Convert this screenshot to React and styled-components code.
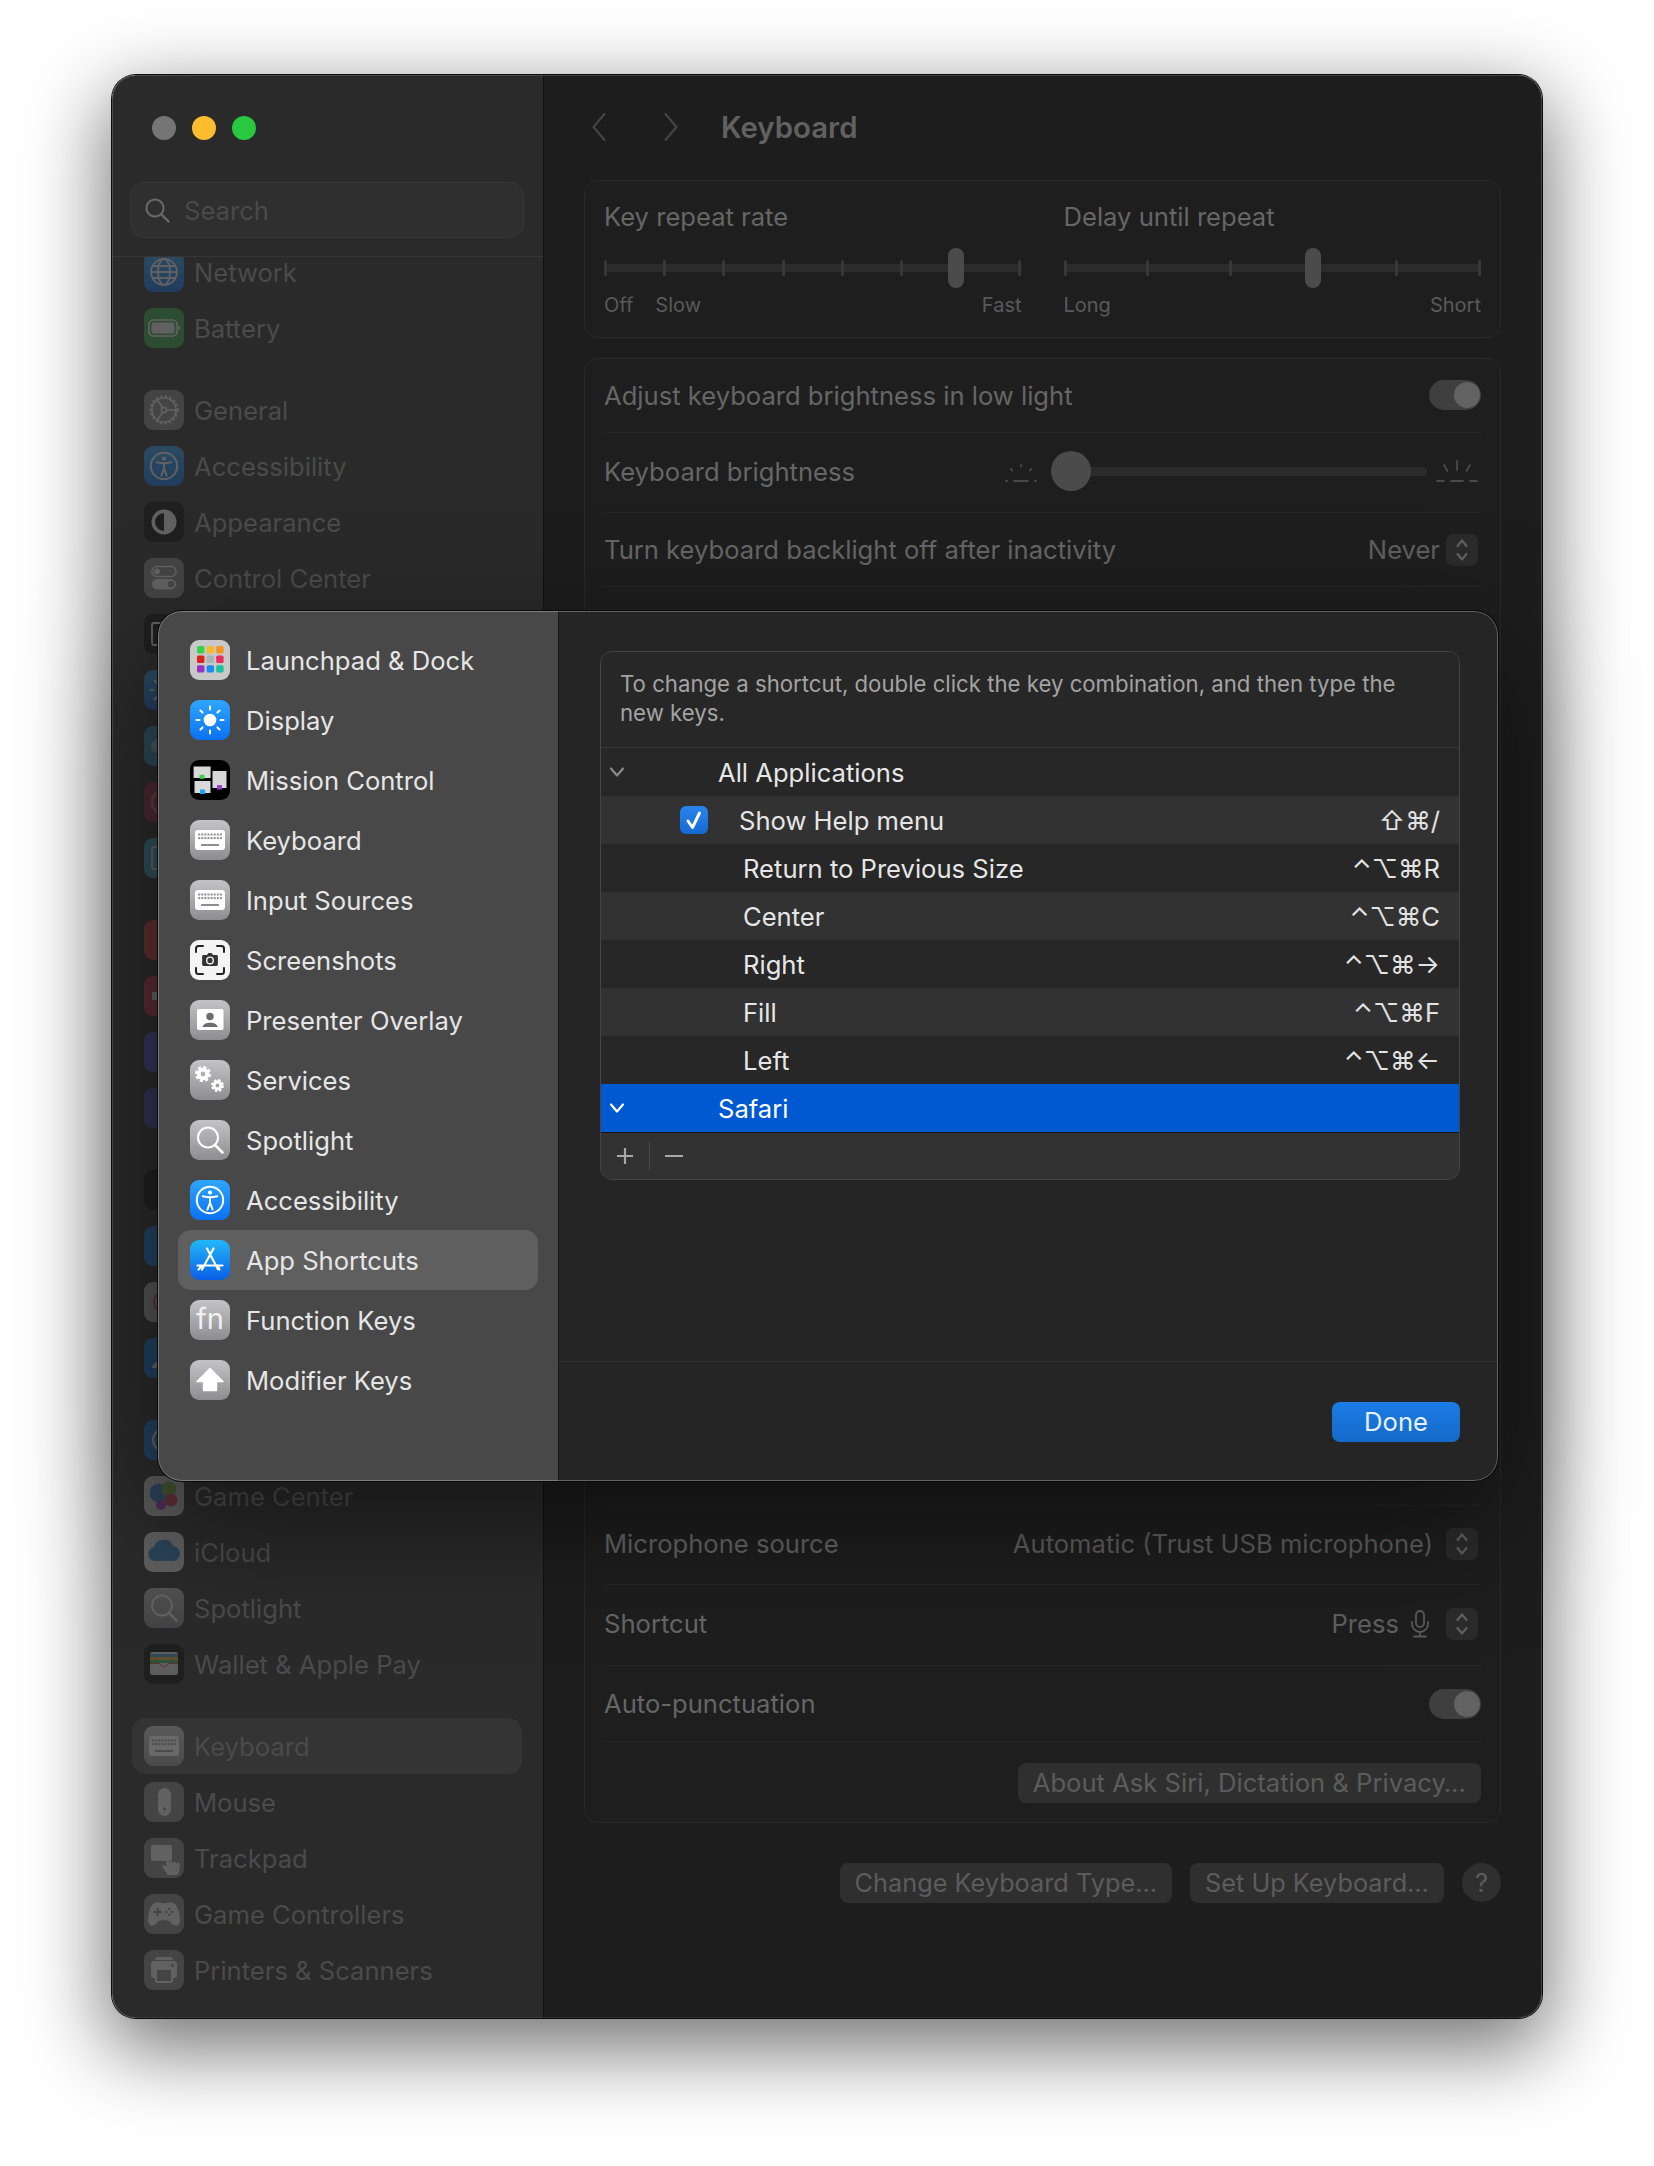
import React from 'react';
import styled, { createGlobalStyle } from 'styled-components';
import { IoGameController, IoPrint } from 'react-icons/io5';
import { FaHandPointer } from 'react-icons/fa';

const FONT = 'Inter, "Noto Sans", "DejaVu Sans", sans-serif';
const grayBg = 'linear-gradient(#c4c4c8, #8c8c91)';
const blueBg = 'linear-gradient(#2ea6ff, #0a72f2)';

const GlobalStyle = createGlobalStyle`
  html, body {
    margin: 0;
    background: #fff;
    font-family: ${FONT};
  }
  body {
    width: 1654px;
    height: 2166px;
    overflow: hidden;
  }
`;

const HandSlot = styled.span`
  position: absolute;
  right: 3px;
  bottom: 3px;
  display: flex;
`;

const Glyph = ({ children }) => (
  <svg width="40" height="40" viewBox="0 0 40 40" fill="none">
    {children}
  </svg>
);

const Gear = ({ x, y, r, color = '#fff' }) => (
  <g>
    <circle cx={x} cy={y} r={r * 0.62} stroke={color} strokeWidth={r * 0.55} />
    <circle cx={x} cy={y} r={r * 0.98} stroke={color} strokeWidth={r * 0.34} strokeDasharray={`${r * 0.45} ${r * 0.32}`} />
  </g>
);

const KeyboardGlyph = () => {
  const keys = [];
  for (let row = 0; row < 2; row++) {
    for (let col = 0; col < 8; col++) {
      keys.push(<rect key={`${row}-${col}`} x={8.2 + col * 3.1} y={13.5 + row * 3.6} width="2" height="2" fill="#8f8f93" />);
    }
  }
  return (
    <Glyph>
      <rect x="5" y="10" width="30" height="20" rx="3" fill="#fff" />
      {keys}
      <rect x="11" y="24" width="18" height="2" fill="#8f8f93" />
    </Glyph>
  );
};

const SunGlyph = () => {
  const rays = [0, 45, 90, 135, 180, 225, 270, 315];
  return (
    <Glyph>
      <circle cx="20" cy="20" r="6.3" fill="#fff" />
      {rays.map((a) => (
        <line key={a} x1="20" y1="9.5" x2="20" y2="6.5" stroke="#fff" strokeWidth="2" strokeLinecap="round" transform={`rotate(${a} 20 20)`} />
      ))}
    </Glyph>
  );
};

const AccessGlyph = () => (
  <Glyph>
    <circle cx="20" cy="20" r="13.2" stroke="#fff" strokeWidth="2" />
    <circle cx="20" cy="12.6" r="2.1" fill="#fff" />
    <path d="M12.8 16.2c4.6 1.2 9.8 1.2 14.4 0M20 17v6M20 22.6l-2.6 7M20 22.6l2.6 7" stroke="#fff" strokeWidth="2" strokeLinecap="round" />
  </Glyph>
);

const SearchGlyph = () => (
  <Glyph>
    <circle cx="18" cy="17.5" r="10" stroke="#fff" strokeWidth="2" />
    <path d="M25 25l7.5 7.5" stroke="#fff" strokeWidth="2.6" strokeLinecap="round" />
  </Glyph>
);

const tiles = {
  launchpad: {
    bg: '#c9c9c9',
    glyph: (
      <Glyph>
        {[
          ['#37d24b', 7, 6], ['#f5bb2c', 16.6, 6], ['#f7941d', 26.2, 6],
          ['#e0201b', 7, 15.6], ['#a8b4bb', 16.6, 15.6], ['#ef2b5d', 26.2, 15.6],
          ['#9a2fc4', 7, 25.2], ['#1a8df0', 16.6, 25.2], ['#18c29c', 26.2, 25.2],
        ].map(([fill, x, y]) => (
          <rect key={fill} x={x} y={y} width="7.4" height="7.4" rx="1.6" fill={fill} />
        ))}
      </Glyph>
    ),
  },
  display: { bg: blueBg, glyph: <SunGlyph /> },
  mission: {
    bg: '#000',
    glyph: (
      <Glyph>
        <rect x="3.6" y="6.5" width="17" height="11.5" fill="#d8d8d8" />
        <rect x="9.5" y="14.8" width="5" height="4" fill="#38d14b" />
        <rect x="4.5" y="21" width="16" height="12" fill="#d8d8d8" />
        <rect x="10" y="29.5" width="5" height="4.5" fill="#13a6f5" />
        <rect x="22.5" y="11" width="14" height="17" fill="#d8d8d8" />
        <rect x="27" y="25" width="5" height="4.5" fill="#9a3fd0" />
      </Glyph>
    ),
  },
  keyboard: { bg: grayBg, glyph: <KeyboardGlyph /> },
  screenshots: {
    bg: '#f4f4f4',
    glyph: (
      <Glyph>
        <path d="M6 12V8.5A2.5 2.5 0 0 1 8.5 6H13M27 6h4.5A2.5 2.5 0 0 1 34 8.5V12M34 28v3.5a2.5 2.5 0 0 1-2.5 2.5H27M13 34H8.5A2.5 2.5 0 0 1 6 31.5V28" stroke="#222" strokeWidth="2" strokeLinecap="round" />
        <path d="M13.5 15h3.5l1.4-2h3.2l1.4 2h3.5a1.4 1.4 0 0 1 1.4 1.4v8.2a1.4 1.4 0 0 1-1.4 1.4h-13a1.4 1.4 0 0 1-1.4-1.4v-8.2a1.4 1.4 0 0 1 1.4-1.4z" fill="#333" />
        <circle cx="20" cy="20.4" r="3.3" stroke="#f4f4f4" strokeWidth="1.4" />
      </Glyph>
    ),
  },
  presenter: {
    bg: grayBg,
    glyph: (
      <Glyph>
        <rect x="7" y="9" width="26.5" height="21" rx="1.8" fill="#fff" />
        <circle cx="20" cy="16.5" r="3.7" fill="#6d6d70" />
        <path d="M12.5 27c.8-5.8 14.4-5.8 15.2 0z" fill="#6d6d70" />
      </Glyph>
    ),
  },
  services: {
    bg: grayBg,
    glyph: (
      <Glyph>
        <Gear x={13} y={14} r={7} />
        <Gear x={27.5} y={25.5} r={5.6} />
      </Glyph>
    ),
  },
  spotlight: { bg: grayBg, glyph: <SearchGlyph /> },
  accessibility: { bg: blueBg, glyph: <AccessGlyph /> },
  appstore: {
    bg: 'linear-gradient(#22b8f8, #0a5fe6)',
    glyph: (
      <Glyph>
        <path d="M17 8.5l10.8 20.5M23.5 8.5L12 29.5M7.5 25.5h25M8.5 29.5l3.5-4M29.5 29.5l-2-4" stroke="#fff" strokeWidth="2.2" strokeLinecap="round" />
      </Glyph>
    ),
  },
  modifier: {
    bg: grayBg,
    glyph: (
      <Glyph>
        <path d="M20 8.5L33 21.5H26.5V30.5H13.5V21.5H7z" fill="#fff" stroke="#fff" strokeWidth="1.4" strokeLinejoin="round" />
      </Glyph>
    ),
  },
  network: {
    bg: blueBg,
    glyph: (
      <Glyph>
        <circle cx="20" cy="20" r="13" stroke="#fff" strokeWidth="1.8" />
        <ellipse cx="20" cy="20" rx="6" ry="13" stroke="#fff" strokeWidth="1.8" />
        <path d="M8.5 14h23M8.5 26h23M7 20h26" stroke="#fff" strokeWidth="1.8" />
      </Glyph>
    ),
  },
  battery: {
    bg: '#35b34a',
    glyph: (
      <Glyph>
        <rect x="5" y="12" width="28" height="16" rx="4.5" stroke="#fff" strokeWidth="1.6" />
        <rect x="7.5" y="14.5" width="23" height="11" rx="2.5" fill="#fff" />
        <rect x="34.2" y="17.5" width="1.6" height="5" rx="0.8" fill="#fff" />
      </Glyph>
    ),
  },
  general: {
    bg: '#8e8e93',
    glyph: (
      <Glyph>
        <circle cx="20" cy="20" r="12" stroke="#fff" strokeWidth="1.6" />
        <circle cx="20" cy="20" r="13.6" stroke="#fff" strokeWidth="1.8" strokeDasharray="2.4 2.2" />
        <circle cx="20" cy="20" r="2.6" stroke="#fff" strokeWidth="1.6" />
        <path d="M22.6 20H32M18.7 17.8L13 9.5M18.7 22.2L13 30.5" stroke="#fff" strokeWidth="1.6" />
      </Glyph>
    ),
  },
  appearance: {
    bg: '#000',
    glyph: (
      <Glyph>
        <circle cx="20" cy="20" r="12.5" fill="#fff" />
        <path d="M20 11a9 9 0 0 0 0 18z" fill="#000" />
      </Glyph>
    ),
  },
  control: {
    bg: '#8e8e93',
    glyph: (
      <Glyph>
        <rect x="8" y="8.5" width="24" height="10" rx="5" stroke="#fff" strokeWidth="1.6" />
        <circle cx="13" cy="13.5" r="3" fill="#fff" />
        <rect x="8" y="21" width="24" height="10.5" rx="5.2" fill="#fff" />
        <circle cx="27" cy="26.2" r="3.2" fill="#8e8e93" />
      </Glyph>
    ),
  },
  gamecenter: {
    bg: '#e8e8e8',
    glyph: (
      <Glyph>
        <circle cx="15" cy="17" r="9.5" fill="#2f8ff0" />
        <circle cx="25" cy="13" r="7.5" fill="#8cc63f" />
        <circle cx="27" cy="24" r="6.5" fill="#f0405f" />
        <circle cx="17" cy="29" r="5" fill="#b03fd0" />
      </Glyph>
    ),
  },
  icloud: {
    bg: '#f5f5f5',
    glyph: (
      <Glyph>
        <path d="M11 29a7 7 0 0 1-1-13.9A10 10 0 0 1 29 14a7.6 7.6 0 0 1 1 15z" fill="#2f8fe0" />
      </Glyph>
    ),
  },
  wallet: {
    bg: '#000',
    glyph: (
      <Glyph>
        <rect x="6" y="8" width="28" height="23" rx="2.5" fill="#eee" />
        <rect x="6" y="10" width="28" height="3" fill="#3fa0e0" />
        <rect x="6" y="13" width="28" height="3" fill="#f5b82e" />
        <rect x="6" y="16" width="28" height="3" fill="#3fc060" />
        <path d="M6 19h9l5 4 5-4h9v1H25l-5 4-5-4H6z" fill="#e0483a" />
      </Glyph>
    ),
  },
  mouse: {
    bg: '#8e8e93',
    glyph: (
      <Glyph>
        <rect x="14" y="6" width="13" height="28" rx="6.5" fill="#fff" />
        <circle cx="20.5" cy="27" r="1.5" fill="#8e8e93" />
      </Glyph>
    ),
  },
  trackpad: {
    bg: '#8e8e93',
    glyph: (
      <>
        <Glyph>
          <rect x="7" y="7" width="21" height="16" rx="2" fill="#fff" />
        </Glyph>
        <HandSlot><FaHandPointer size={20} color="#fff" /></HandSlot>
      </>
    ),
  },
  controller: { bg: '#8e8e93', glyph: <IoGameController size={34} color="#fff" /> },
  printer: { bg: '#8e8e93', glyph: <IoPrint size={32} color="#fff" /> },
  dock: {
    bg: '#000',
    glyph: (
      <Glyph>
        <rect x="8" y="9" width="24" height="22" rx="2" stroke="#fff" strokeWidth="1.8" />
      </Glyph>
    ),
  },
  teal: { bg: '#3fb4d8', glyph: <Glyph><rect x="8" y="9" width="24" height="22" rx="2" stroke="#fff" strokeWidth="1.8" /></Glyph> },
  saver: { bg: '#b0204e', glyph: <Glyph><circle cx="20" cy="20" r="12" stroke="#f06a90" strokeWidth="3" /></Glyph> },
  wallpaper: { bg: '#2f9bd0', glyph: <Glyph><circle cx="14" cy="20" r="7" fill="#8fd6f0" /></Glyph> },
  notify: { bg: '#f0403a', glyph: <Glyph><circle cx="24" cy="20" r="9" fill="#fff" /></Glyph> },
  sound: { bg: '#ee2a50', glyph: <Glyph><path d="M8 16h6l8-7v22l-8-7H8z" fill="#fff" /></Glyph> },
  focus: { bg: '#5a50e0', glyph: <Glyph><circle cx="22" cy="20" r="9" fill="#fff" /></Glyph> },
  time: { bg: '#5040c8', glyph: null },
  lock: { bg: '#000', glyph: <Glyph><circle cx="16" cy="31" r="1.4" fill="#fff" /></Glyph> },
  privacy: { bg: '#0a84ff', glyph: null },
  touch: { bg: '#c8c8c8', glyph: <Glyph><circle cx="20" cy="20" r="10" stroke="#e0303a" strokeWidth="1.6" /><circle cx="20" cy="20" r="6" stroke="#e0303a" strokeWidth="1.6" /></Glyph> },
  users: { bg: '#0a84ff', glyph: <Glyph><circle cx="18" cy="15" r="5" fill="#fff" /><path d="M8 30c0-9 20-9 20 0z" fill="#fff" /></Glyph> },
  internet: { bg: '#0a84ff', glyph: <Glyph><circle cx="20" cy="20" r="11" stroke="#fff" strokeWidth="2" /></Glyph> },
};

const sideSections = [
  [['network', 'Network'], ['battery', 'Battery']],
  [['general', 'General'], ['accessibility', 'Accessibility'], ['appearance', 'Appearance'], ['control', 'Control Center'], ['dock'], ['display'], ['wallpaper'], ['saver'], ['teal']],
  [['notify'], ['sound'], ['focus'], ['time']],
  [['lock'], ['privacy'], ['touch'], ['users']],
  [['internet'], ['gamecenter', 'Game Center'], ['icloud', 'iCloud'], ['spotlight', 'Spotlight'], ['wallet', 'Wallet & Apple Pay']],
  [['keyboard', 'Keyboard', true], ['mouse', 'Mouse'], ['trackpad', 'Trackpad'], ['controller', 'Game Controllers'], ['printer', 'Printers & Scanners']],
];

const dialogItems = [
  ['launchpad', 'Launchpad & Dock'],
  ['display', 'Display'],
  ['mission', 'Mission Control'],
  ['keyboard', 'Keyboard'],
  ['keyboard', 'Input Sources'],
  ['screenshots', 'Screenshots'],
  ['presenter', 'Presenter Overlay'],
  ['services', 'Services'],
  ['spotlight', 'Spotlight'],
  ['accessibility', 'Accessibility'],
  ['appstore', 'App Shortcuts'],
  ['fn', 'Function Keys'],
  ['modifier', 'Modifier Keys'],
];

const shortcuts = [
  ['Return to Previous Size', '⌃⌥⌘R'],
  ['Center', '⌃⌥⌘C', true],
  ['Right', '⌃⌥⌘→'],
  ['Fill', '⌃⌥⌘F', true],
  ['Left', '⌃⌥⌘←'],
];

const Chevron = ({ dir, color = '#444' }) => (
  <svg width="16" height="30" viewBox="0 0 16 30" fill="none">
    <path d={dir === 'left' ? 'M13.5 2L2.5 15l11 13' : 'M2.5 2l11 13-11 13'} stroke={color} strokeWidth="2.2" strokeLinecap="round" strokeLinejoin="round" />
  </svg>
);

const Disclosure = ({ color }) => (
  <svg width="16" height="12" viewBox="0 0 16 12" fill="none">
    <path d="M2 2.5l6 7 6-7" stroke={color} strokeWidth="2.2" strokeLinecap="round" strokeLinejoin="round" />
  </svg>
);

const Stepper = () => (
  <StepperBox>
    <svg width="14" height="26" viewBox="0 0 14 26" fill="none">
      <path d="M2.5 9L7 3.5 11.5 9M2.5 17L7 22.5 11.5 17" stroke="#606060" strokeWidth="2.2" strokeLinecap="round" strokeLinejoin="round" />
    </svg>
  </StepperBox>
);

const Slider = ({ ticks, at }) => (
  <SliderTrack>
    {Array.from({ length: ticks }, (_, i) => (
      <Tick key={i} />
    ))}
    <SliderThumb $at={at} />
  </SliderTrack>
);

const BrightnessIcon = ({ large }) => (
  <svg width="44" height="24" viewBox="0 0 44 24" fill="none" stroke="#4a4a4a" strokeWidth="1.8" strokeLinecap="round">
    {large ? (
      <path d="M22 1v9M9 5l3.5 6M35 5l-3.5 6M2 21h7M16 21h12M35 21h7" />
    ) : (
      <path d="M22 5v1.5M12 9l1 1.5M32 9l-1 1.5M7 21h1M15 21h14M36 21h1" />
    )}
  </svg>
);

const SidebarRow = ({ icon, label, active }) => (
  <SideRow $active={active}>
    <Tile $bg={tiles[icon].bg} $dim>
      {tiles[icon].glyph}
    </Tile>
    {label && <SideLabel>{label}</SideLabel>}
  </SideRow>
);

export default function App() {
  return (
    <Page>
      <GlobalStyle />
      <Window>
        <Sidebar>
          <SidebarHeader>
            <TrafficLights>
              <Light $color="#757575" />
              <Light $color="#febc2e" />
              <Light $color="#28c840" />
            </TrafficLights>
            <SearchField>
              <svg width="26" height="26" viewBox="0 0 26 26" fill="none" stroke="#6a6a6a">
                <circle cx="11" cy="11" r="8.6" strokeWidth="2" />
                <path d="M17.5 17.5l7 7" strokeWidth="2.4" strokeLinecap="round" />
              </svg>
              <span>Search</span>
            </SearchField>
          </SidebarHeader>
          <SideScroll>
            <SideList>
              {sideSections.map((section, i) => (
                <SideSection key={i}>
                  {section.map(([icon, label, active], j) => (
                    <SidebarRow key={j} icon={icon} label={label} active={active} />
                  ))}
                </SideSection>
              ))}
            </SideList>
          </SideScroll>
        </Sidebar>

        <Main>
          <TitleBar>
            <Chevron dir="left" />
            <ChevronGap />
            <Chevron dir="right" />
            <Title>Keyboard</Title>
          </TitleBar>

          <RepeatCard>
            <RepeatColumn>
              <CardTitle>Key repeat rate</CardTitle>
              <Slider ticks={8} at={344} />
              <Captions>
                <CaptionGroup>
                  <span>Off</span>
                  <span>Slow</span>
                </CaptionGroup>
                <span>Fast</span>
              </Captions>
            </RepeatColumn>
            <RepeatColumn>
              <CardTitle>Delay until repeat</CardTitle>
              <Slider ticks={6} at={241} />
              <Captions>
                <span>Long</span>
                <span>Short</span>
              </Captions>
            </RepeatColumn>
          </RepeatCard>

          <SettingsCard>
            <SettingRow $h={74} $lift={1}>
              <span>Adjust keyboard brightness in low light</span>
              <Toggle />
            </SettingRow>
            <SettingRow $h={80} $lift={2}>
              <span>Keyboard brightness</span>
              <Brightness>
                <BrightnessIcon />
                <BrightnessTrack>
                  <BrightnessKnob />
                </BrightnessTrack>
                <BrightnessIcon large />
              </Brightness>
            </SettingRow>
            <SettingRow $h={74}>
              <span>Turn keyboard backlight off after inactivity</span>
              <Value $gap={6}>
                Never
                <Stepper />
              </Value>
            </SettingRow>
            <CoveredRows />
            <SettingRow $h={80} $top $lift={3}>
              <span>Microphone source</span>
              <Value $gap={13}>
                Automatic (Trust USB microphone)
                <Stepper />
              </Value>
            </SettingRow>
            <SettingRow $h={81} $lift={3}>
              <span>Shortcut</span>
              <Value $gap={10}>
                Press
                <MicIcon width="22" height="30" viewBox="0 0 22 30" fill="none" stroke="#5a5a5a" strokeWidth="1.8" strokeLinecap="round">
                  <rect x="7" y="2" width="8" height="16" rx="4" />
                  <path d="M3 13v2a8 8 0 0 0 16 0v-2M11 23v4M5 27.5h12" />
                </MicIcon>
                <Stepper />
              </Value>
            </SettingRow>
            <SettingRow $h={76}>
              <span>Auto-punctuation</span>
              <Toggle />
            </SettingRow>
            <ButtonRow>
              <PlainButton>About Ask Siri, Dictation &amp; Privacy…</PlainButton>
            </ButtonRow>
          </SettingsCard>

          <FooterButtons>
            <PlainButton $small>Change Keyboard Type…</PlainButton>
            <PlainButton $small>Set Up Keyboard…</PlainButton>
            <HelpButton>?</HelpButton>
          </FooterButtons>
        </Main>

        <Dialog>
          <DialogNav>
            {dialogItems.map(([icon, label]) => (
              <NavRow key={label} $active={label === 'App Shortcuts'}>
                {icon === 'fn' ? (
                  <Tile $bg={grayBg}>
                    <FnText>fn</FnText>
                  </Tile>
                ) : (
                  <Tile $bg={tiles[icon].bg}>{tiles[icon].glyph}</Tile>
                )}
                <span>{label}</span>
              </NavRow>
            ))}
          </DialogNav>
          <DialogPane>
            <DialogBody>
              <ShortcutTable>
                <TableNote>
                  To change a shortcut, double click the key combination, and then type the new keys.
                </TableNote>
                <GroupRow>
                  <Disclosure color="#8a8a8a" />
                  <GroupLabel>All Applications</GroupLabel>
                </GroupRow>
                <ShortcutRow $alt>
                  <CheckBox>
                    <svg width="20" height="22" viewBox="0 0 20 22" fill="none">
                      <path d="M4 12l4.5 6.5L15.5 4" stroke="#fff" strokeWidth="3" strokeLinecap="round" strokeLinejoin="round" />
                    </svg>
                  </CheckBox>
                  <CheckedLabel>Show Help menu</CheckedLabel>
                  <Keys>⇧⌘/</Keys>
                </ShortcutRow>
                {shortcuts.map(([label, keys, alt]) => (
                  <ShortcutRow key={label} $alt={alt}>
                    <ItemLabel>{label}</ItemLabel>
                    <Keys>{keys}</Keys>
                  </ShortcutRow>
                ))}
                <GroupRow $selected>
                  <Disclosure color="#fff" />
                  <GroupLabel>Safari</GroupLabel>
                </GroupRow>
                <TableTools>
                  <ToolButton>
                    <svg width="16" height="16" viewBox="0 0 16 16" fill="none" stroke="#a8a8a8" strokeWidth="2.2">
                      <path d="M8 0v16M0 8h16" />
                    </svg>
                  </ToolButton>
                  <ToolButton $minus>
                    <svg width="18" height="16" viewBox="0 0 18 16" fill="none" stroke="#a8a8a8" strokeWidth="2.2">
                      <path d="M0 8h18" />
                    </svg>
                  </ToolButton>
                </TableTools>
              </ShortcutTable>
            </DialogBody>
            <DialogFooter>
              <DoneButton>Done</DoneButton>
            </DialogFooter>
          </DialogPane>
        </Dialog>
      </Window>
    </Page>
  );
}

const Page = styled.div`
  padding: 75px 0 0 112px;
`;

const Window = styled.div`
  position: relative;
  display: grid;
  grid-template-columns: 432px 1fr;
  width: 1430px;
  height: 1943px;
  border-radius: 24px;
  box-shadow: 0 0 0 1px #0c0c0c, 0 26px 80px 6px rgba(0, 0, 0, 0.55);
  color: #666;
  font-size: 25.6px;

  &::after {
    content: '';
    position: absolute;
    inset: 0;
    border-radius: 24px;
    border: 1px solid rgba(255, 255, 255, 0.16);
    border-bottom-color: rgba(255, 255, 255, 0.08);
    pointer-events: none;
  }
`;

const Sidebar = styled.aside`
  display: flex;
  flex-direction: column;
  min-height: 0;
  overflow: hidden;
  background: #2a2a2a;
  border-right: 1px solid #111;
  border-radius: 24px 0 0 24px;
`;

const SidebarHeader = styled.div`
  flex: none;
  height: 182px;
  padding: 41px 19px 0 18px;
  box-sizing: border-box;
  border-bottom: 1px solid #363636;
`;

const TrafficLights = styled.div`
  display: flex;
  gap: 16px;
  padding-left: 22px;
`;

const Light = styled.span`
  width: 24px;
  height: 24px;
  border-radius: 50%;
  background: ${({ $color }) => $color};
`;

const SearchField = styled.div`
  display: flex;
  align-items: center;
  gap: 14px;
  height: 56px;
  margin-top: 42px;
  padding-left: 13px;
  box-sizing: border-box;
  border: 1px solid #373737;
  border-radius: 14px;
  background: #2f2f2f;
  color: #4a4a4a;
`;

const SideScroll = styled.div`
  flex: 1;
  min-height: 0;
  overflow: hidden;
`;

const SideList = styled.div`
  display: flex;
  flex-direction: column;
  gap: 26px;
  margin-top: -13px;
`;

const SideSection = styled.div`
  display: flex;
  flex-direction: column;
`;

const SideRow = styled.div`
  display: flex;
  align-items: center;
  gap: 10px;
  height: 56px;
  margin: 0 21px 0 20px;
  padding-left: 12px;
  border-radius: 14px;
  background: ${({ $active }) => ($active ? '#343434' : 'transparent')};
  flex: none;
`;

const SideLabel = styled.span`
  color: #4b4b4b;
`;

const Tile = styled.div`
  position: relative;
  flex: none;
  display: flex;
  align-items: center;
  justify-content: center;
  width: 40px;
  height: 40px;
  border-radius: 9px;
  overflow: hidden;
  background: ${({ $bg }) => $bg};
  opacity: ${({ $dim }) => ($dim ? 0.26 : 1)};
`;

const FnText = styled.span`
  color: #f2f2f2;
  font-size: 29px;
  font-weight: 400;
  line-height: 1;
  margin-top: -4px;
`;

const Main = styled.main`
  display: flex;
  flex-direction: column;
  padding: 0 41px 0 40px;
  background: #1d1d1d;
  min-width: 0;
  overflow: hidden;
  border-radius: 0 24px 24px 0;
`;

const TitleBar = styled.header`
  flex: none;
  display: flex;
  align-items: center;
  height: 104px;
  margin-bottom: 1px;
  padding: 0 0 0 7px;
  box-sizing: border-box;
`;

const ChevronGap = styled.span`
  width: 56px;
`;

const Title = styled.h1`
  margin: 0 0 0 42px;
  color: #616161;
  font-size: 29.4px;
  font-weight: 600;
`;

const CardBase = styled.section`
  box-sizing: border-box;
  border: 1px solid #292929;
  border-radius: 14px;
  background: #1e1e1e;
`;

const RepeatCard = styled(CardBase)`
  flex: none;
  display: flex;
  gap: 42px;
  height: 158px;
  padding: 20px 19px 0 19px;
`;

const RepeatColumn = styled.div`
  flex: 1;
  min-width: 0;
`;

const CardTitle = styled.div`
  height: 32px;
  line-height: 32px;
`;

const SliderTrack = styled.div`
  position: relative;
  display: flex;
  align-items: center;
  justify-content: space-between;
  height: 40px;
  margin-top: 15px;
  background: linear-gradient(#2b2b2b, #2b2b2b) center / 100% 8px no-repeat;
`;

const Tick = styled.span`
  width: 3px;
  height: 16px;
  border-radius: 2px;
  background: #383838;
`;

const SliderThumb = styled.span`
  position: absolute;
  top: 0;
  left: ${({ $at }) => $at}px;
  width: 16px;
  height: 40px;
  border-radius: 8px;
  background: #4b4b4b;
`;

const Captions = styled.div`
  display: flex;
  justify-content: space-between;
  height: 24px;
  margin-top: 5px;
  color: #5a5a5a;
  font-size: 20px;
  line-height: 24px;
`;

const CaptionGroup = styled.div`
  display: flex;
  gap: 22px;
`;

const SettingsCard = styled(CardBase)`
  flex: none;
  height: 1465px;
  margin-top: 20px;
  padding: 0 19px 0 19px;
`;

const SettingRow = styled.div`
  display: flex;
  align-items: center;
  justify-content: space-between;
  height: ${({ $h }) => $h}px;
  padding-bottom: ${({ $lift }) => $lift || 0}px;
  box-sizing: border-box;
  border-bottom: 1px solid #272727;
  border-top: ${({ $top }) => ($top ? '1px solid #272727' : 'none')};
`;

const CoveredRows = styled.div`
  height: 918px;
`;

const Toggle = styled.span`
  position: relative;
  width: 52px;
  height: 30px;
  border-radius: 15px;
  background: #3f3f3f;

  &::after {
    content: '';
    position: absolute;
    top: 2px;
    right: 1px;
    width: 26px;
    height: 26px;
    border-radius: 50%;
    background: #626262;
  }
`;

const Brightness = styled.div`
  display: flex;
  align-items: center;
  gap: 8px;
  width: 480px;
  margin-right: 2px;
`;

const BrightnessTrack = styled.div`
  position: relative;
  flex: 1;
  height: 9px;
  border-radius: 5px;
  background: #2b2b2b;
`;

const BrightnessKnob = styled.span`
  position: absolute;
  top: -16px;
  left: 0;
  width: 40px;
  height: 40px;
  border-radius: 50%;
  background: #4b4b4b;
`;

const Value = styled.div`
  display: flex;
  align-items: center;
  gap: ${({ $gap }) => $gap}px;
  margin-right: 3px;
  color: #5f5f5f;
`;

const MicIcon = styled.svg`
  margin-right: 5px;
`;

const StepperBox = styled.span`
  display: flex;
  align-items: center;
  justify-content: center;
  width: 32px;
  height: 32px;
  border-radius: 7px;
  background: #2b2b2b;
`;

const ButtonRow = styled.div`
  display: flex;
  justify-content: flex-end;
  padding-top: 21px;
`;

const PlainButton = styled.button`
  height: 40px;
  padding: 0 15px 2px;
  border: none;
  border-radius: 8px;
  background: #2f2f2f;
  color: #5c5c5c;
  font: inherit;
  font-size: ${({ $small }) => ($small ? '25.3px' : '25.6px')};
`;

const FooterButtons = styled.div`
  flex: none;
  display: flex;
  justify-content: flex-end;
  gap: 18px;
  margin-top: 40px;
`;

const HelpButton = styled.span`
  width: 39px;
  height: 39px;
  border-radius: 50%;
  background: #2f2f2f;
  color: #5c5c5c;
  text-align: center;
  line-height: 39px;
`;

const Dialog = styled.div`
  position: absolute;
  left: 46px;
  top: 536px;
  display: grid;
  grid-template-columns: 401px 1fr;
  width: 1340px;
  height: 870px;
  border-radius: 24px;
  overflow: hidden;
  box-shadow: 0 0 0 1px #0a0a0a, 0 40px 120px rgba(0, 0, 0, 0.5);
  color: #e6e6e6;
  z-index: 2;

  &::after {
    content: '';
    position: absolute;
    inset: 0;
    border-radius: 24px;
    border: 1px solid rgba(255, 255, 255, 0.28);
    pointer-events: none;
  }
`;

const DialogNav = styled.nav`
  display: flex;
  flex-direction: column;
  padding: 19px 20px 0;
  background: #484848;
  border-right: 1px solid #191919;
`;

const NavRow = styled.div`
  display: flex;
  align-items: center;
  gap: 16px;
  height: 60px;
  padding-left: 12px;
  border-radius: 13px;
  background: ${({ $active }) => ($active ? '#5f5f5f' : 'transparent')};
  flex: none;
`;

const DialogPane = styled.div`
  display: flex;
  flex-direction: column;
  min-width: 0;
  background: #252525;
`;

const DialogBody = styled.div`
  flex: 1;
  padding: 40px 38px 0 41px;
`;

const ShortcutTable = styled.div`
  border: 1px solid #454545;
  border-radius: 12px;
  overflow: hidden;
  background: #323232;
`;

const TableNote = styled.p`
  margin: 0;
  height: 96px;
  padding: 18px 40px 0 19px;
  box-sizing: border-box;
  border-bottom: 1px solid #383838;
  background: #272727;
  color: #a3a3a3;
  font-size: 22.2px;
  line-height: 28.5px;
`;

const GroupRow = styled.div`
  display: flex;
  align-items: center;
  height: 48px;
  padding-left: 8px;
  background: ${({ $selected }) => ($selected ? '#0059d1' : '#272727')};
  color: ${({ $selected }) => ($selected ? '#fff' : '#e6e6e6')};
  box-shadow: ${({ $selected }) => ($selected ? '0 1px 0 #161616' : 'none')};
  position: relative;
`;

const GroupLabel = styled.span`
  margin-left: 93px;
`;

const ShortcutRow = styled.div`
  display: flex;
  align-items: center;
  height: 48px;
  padding-right: 19px;
  background: ${({ $alt }) => ($alt ? '#323232' : '#272727')};
`;

const CheckBox = styled.span`
  display: flex;
  align-items: center;
  justify-content: center;
  flex: none;
  width: 28px;
  height: 28px;
  margin-left: 79px;
  border-radius: 6px;
  background: linear-gradient(#2a84ec, #1569d3);
`;

const CheckedLabel = styled.span`
  margin-left: 31px;
`;

const ItemLabel = styled.span`
  margin-left: 142px;
`;

const Keys = styled.span`
  margin-left: auto;
  color: #e2e2e2;
`;

const TableTools = styled.div`
  display: flex;
  align-items: center;
  height: 47px;
  background: #323232;
`;

const ToolButton = styled.span`
  display: flex;
  align-items: center;
  justify-content: center;
  width: 48px;
  height: 28px;
  border-right: ${({ $minus }) => ($minus ? 'none' : '1px solid #484848')};
`;

const DialogFooter = styled.div`
  flex: none;
  display: flex;
  justify-content: flex-end;
  align-items: flex-start;
  height: 120px;
  padding: 40px 38px 0 0;
  box-sizing: border-box;
  border-top: 1px solid #2f2f2f;
`;

const DoneButton = styled.button`
  width: 128px;
  height: 40px;
  padding-bottom: 2px;
  border: none;
  border-radius: 8px;
  background: linear-gradient(#1b7ce6, #1469c8);
  color: #e8f0fa;
  font: inherit;
  font-size: 25.6px;
`;
